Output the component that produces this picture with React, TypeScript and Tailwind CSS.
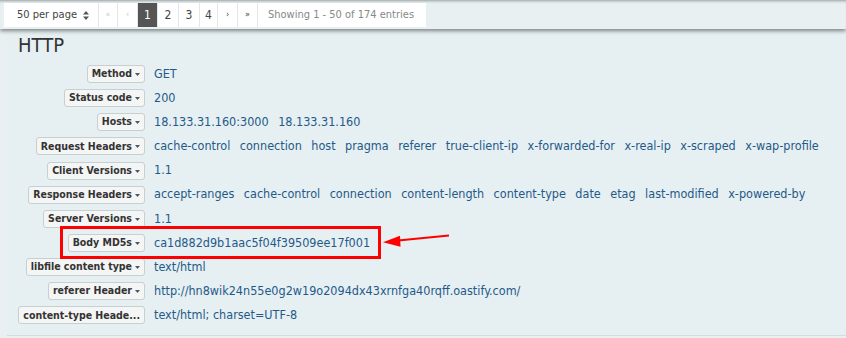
import React from "react";

const rows: { label: string; values: string[]; caret?: boolean }[] = [
  { label: "Method", values: ["GET"] },
  { label: "Status code", values: ["200"] },
  { label: "Hosts", values: ["18.133.31.160:3000", "18.133.31.160"] },
  {
    label: "Request Headers",
    values: [
      "cache-control",
      "connection",
      "host",
      "pragma",
      "referer",
      "true-client-ip",
      "x-forwarded-for",
      "x-real-ip",
      "x-scraped",
      "x-wap-profile",
    ],
  },
  { label: "Client Versions", values: ["1.1"] },
  {
    label: "Response Headers",
    values: [
      "accept-ranges",
      "cache-control",
      "connection",
      "content-length",
      "content-type",
      "date",
      "etag",
      "last-modified",
      "x-powered-by",
    ],
  },
  { label: "Server Versions", values: ["1.1"] },
  { label: "Body MD5s", values: ["ca1d882d9b1aac5f04f39509ee17f001"] },
  { label: "libfile content type", values: ["text/html"] },
  {
    label: "referer Header",
    values: ["http://hn8wik24n55e0g2w19o2094dx43xrnfga40rqff.oastify.com/"],
  },
  { label: "content-type Heade...", values: ["text/html; charset=UTF-8"], caret: false },
];

function Caret() {
  return (
    <svg width="5" height="3" viewBox="0 0 5 3" className="ml-[3px] mt-[1px]">
      <path d="M0 0h5L2.5 3z" fill="#555" />
    </svg>
  );
}

function PageCell({ children, active = false, muted = false, className = "" }: any) {
  return (
    <div
      className={
        "flex h-full items-center justify-center border-r border-[#e4e8e8] " +
        (active ? "bg-[#555] text-white " : muted ? "text-[#c8cccc] " : "text-[#444] ") +
        className
      }
    >
      {children}
    </div>
  );
}

export default function App() {
  return (
    <div
      className="relative w-[846px] h-[338px] overflow-hidden bg-[#e8f0f2]"
      style={{ fontFamily: '"DejaVu Sans Condensed", "DejaVu Sans", sans-serif' }}
    >
      {/* top toolbar */}
      <div className="relative z-10 h-[29px] bg-[#e8f0f2] pt-[3px] shadow-[inset_0_3px_3px_-2px_rgba(0,0,0,0.35),0_2px_4px_rgba(0,0,0,0.45)]">
        <div className="ml-[4px] flex h-[24px] w-[422px] bg-white text-[11px]">
          <PageCell className="w-[95px] justify-start pl-[13px]">
            <span className="w-[62px] overflow-hidden whitespace-nowrap">50 per page</span>
            <svg width="6" height="9" viewBox="0 0 6 9" className="ml-[4px]">
              <path d="M0 3.5L3 0l3 3.5zM0 5.5h6L3 9z" fill="#555" />
            </svg>
          </PageCell>
          <PageCell muted className="w-[19px] text-[9px]">«</PageCell>
          <PageCell muted className="w-[20px] text-[9px]">‹</PageCell>
          <PageCell active className="w-[20px] text-[12px]">1</PageCell>
          <PageCell className="w-[21px] text-[12px]">2</PageCell>
          <PageCell className="w-[21px] text-[12px]">3</PageCell>
          <PageCell className="w-[18px] text-[12px]">4</PageCell>
          <PageCell className="w-[20px] text-[9px]">›</PageCell>
          <PageCell className="w-[20px] text-[9px]">»</PageCell>
          <div className="flex flex-1 items-center pl-[10px] text-[11px] text-[#888]">
            Showing 1 - 50 of 174 entries
          </div>
        </div>
      </div>

      {/* HTTP panel */}
      <div className="ml-[7px] h-[307px] border-b border-[#d3dcde] bg-[#e6eff1] pl-[11px]">
        <h3 className="pt-[4px] text-[20px] leading-[24px] text-[#333]">HTTP</h3>
        <div className="mt-[5px] flex flex-col">
          {rows.map((row) => (
            <div key={row.label} className="flex h-[24.15px] items-center">
              <div className="flex w-[127px] shrink-0 justify-end">
                <div className="flex h-[18px] max-w-[127px] items-center rounded-[3px] border border-[#c9cfcf] bg-[#f4f5f5] px-[4px] text-[10.5px] font-bold text-[#333] whitespace-nowrap">
                  {row.label}
                  {row.caret !== false && <Caret />}
                </div>
              </div>
              <div className="ml-[9px] flex gap-[9.5px] whitespace-nowrap text-[12.5px] text-[#1f5a8a]">
                {row.values.map((v, i) => (
                  <span key={i}>{v}</span>
                ))}
              </div>
            </div>
          ))}
        </div>
      </div>

      {/* annotation */}
      <div className="absolute left-[60px] top-[226px] h-[33px] w-[321px] border-[3px] border-[#ff0000]" />
      <svg className="absolute left-[380px] top-[230px]" width="72" height="20" viewBox="0 0 72 20">
        <path d="M69 5.5L18 10.5" stroke="#ff0000" strokeWidth="2.2" fill="none" />
        <path d="M3 12.3L20 5.7L20.5 16.7z" fill="#ff0000" />
      </svg>
    </div>
  );
}
